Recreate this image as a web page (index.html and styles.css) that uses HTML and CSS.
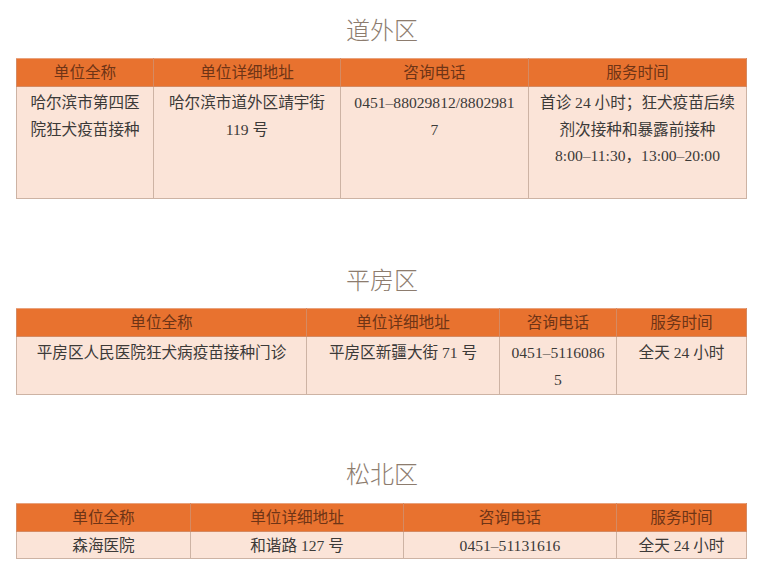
FILE: index.html
```html
<!DOCTYPE html>
<html lang="zh-CN">
<head>
<meta charset="utf-8">
<title>狂犬疫苗接种门诊</title>
<link rel="stylesheet" href="styles.css">
</head>
<body>
<main class="page">
  <section class="district district-first">
    <h2 class="district-title">道外区</h2>
    <table class="clinic-table t1">
      <colgroup><col class="c137"><col class="c187"><col class="c188"><col class="c218"></colgroup>
      <thead><tr><th>单位全称</th><th>单位详细地址</th><th>咨询电话</th><th>服务时间</th></tr></thead>
      <tbody><tr class="row-tall">
        <td>哈尔滨市第四医<br>院狂犬疫苗接种</td>
        <td>哈尔滨市道外区靖宇街<br>119 号</td>
        <td>0451–88029812/8802981<br>7</td>
        <td>首诊 24 小时；狂犬疫苗后续<br>剂次接种和暴露前接种<br>8:00–11:30，13:00–20:00</td>
      </tr></tbody>
    </table>
  </section>

  <section class="district district-second">
    <h2 class="district-title">平房区</h2>
    <table class="clinic-table t2">
      <colgroup><col class="c290"><col class="c193"><col class="c117"><col class="c130"></colgroup>
      <thead><tr><th>单位全称</th><th>单位详细地址</th><th>咨询电话</th><th>服务时间</th></tr></thead>
      <tbody><tr class="row-mid">
        <td>平房区人民医院狂犬病疫苗接种门诊</td>
        <td>平房区新疆大街 71 号</td>
        <td>0451–5116086<br>5</td>
        <td>全天 24 小时</td>
      </tr></tbody>
    </table>
  </section>

  <section class="district district-third">
    <h2 class="district-title">松北区</h2>
    <table class="clinic-table t3">
      <colgroup><col class="c174"><col class="c213"><col class="c213"><col class="c130"></colgroup>
      <thead><tr><th>单位全称</th><th>单位详细地址</th><th>咨询电话</th><th>服务时间</th></tr></thead>
      <tbody><tr class="row-short">
        <td>森海医院</td>
        <td>和谐路 127 号</td>
        <td>0451–51131616</td>
        <td>全天 24 小时</td>
      </tr></tbody>
    </table>
  </section>
</main>
</body>
</html>
```
FILE: styles.css
```css
html, body {
  margin: 0;
  padding: 0;
  background: #ffffff;
}

body {
  font-family: "Liberation Serif", "Noto Sans CJK SC", serif;
  color: #3c3a38;
}

.page {
  padding: 0 16px;
}

.district-first { padding-top: 16px; }
.district-second { padding-top: 67px; }
.district-third { padding-top: 65px; }

.district-title {
  margin: 0 0 12px;
  text-align: center;
  font-size: 24px;
  line-height: 30px;
  font-weight: 300;
  color: #8d7c6e;
}

.district-third .district-title { margin-bottom: 13px; }

.clinic-table {
  width: 730px;
  table-layout: fixed;
  border-collapse: collapse;
  font-size: 15.6px;
  font-weight: 400;
}

.c137 { width: 137px; }
.c187 { width: 187px; }
.c188 { width: 188px; }
.c218 { width: 218px; }
.c290 { width: 290px; }
.c193 { width: 193px; }
.c117 { width: 117px; }
.c130 { width: 130px; }
.c174 { width: 174px; }
.c213 { width: 213px; }

.clinic-table th {
  background: #e8722f;
  color: #6e3416;
  font-weight: 400;
  height: 28px;
  padding: 0;
  line-height: 26px;
  border: 1px solid #d58a62;
  border-top-color: #e9a27c;
  text-align: center;
  box-sizing: border-box;
}

.clinic-table td {
  background: #fbe4d8;
  border: 1px solid #cdb3a4;
  text-align: center;
  vertical-align: top;
  line-height: 26.5px;
  padding: 3px 4px 0;
  box-sizing: border-box;
  white-space: nowrap;
}

.row-tall td { height: 112px; }
.row-mid td { height: 58px; }
.row-short td { height: 27px; padding-top: 1px; line-height: 25px; }
```
